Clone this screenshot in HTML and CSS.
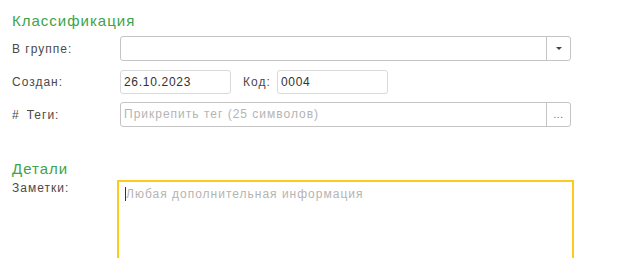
FILE: index.html
```html
<!DOCTYPE html>
<html lang="ru">
<head>
<meta charset="utf-8">
<link rel="stylesheet" href="styles.css">
</head>
<body>
<div class="form">
  <div class="title">Классификация</div>
  <div class="row">
    <div class="label">В группе:</div>
    <div class="field wide">
      <div class="value"></div>
      <div class="btn"><span class="tri"></span></div>
    </div>
  </div>
  <div class="row">
    <div class="label">Создан:</div>
    <div class="field short"><div class="value num">26.10.2023</div></div>
    <div class="label inline">Код:</div>
    <div class="field short"><div class="value num">0004</div></div>
  </div>
  <div class="row">
    <div class="label"><span class="hash">#</span>Теги:</div>
    <div class="field wide">
      <div class="value ph">Прикрепить тег (25 символов)</div>
      <div class="btn dots">...</div>
    </div>
  </div>
  <div class="title second">Детали</div>
  <div class="row notes-row">
    <div class="label notes-label">Заметки:</div>
    <div class="notes"><span class="caret"></span><span class="ph">Любая дополнительная информация</span></div>
  </div>
</div>
</body>
</html>
```
FILE: styles.css
```css
html, body {
  margin: 0;
  padding: 0;
  background: #ffffff;
  overflow: hidden;
}
.form {
  font-family: "Liberation Sans", Arial, sans-serif;
  font-size: 12px;
  letter-spacing: 1px;
  color: #4a4a4a;
  padding: 12px 0 0 12px;
  width: 608px;
  height: 246px;
  overflow: hidden;
}
.title {
  font-size: 15px;
  line-height: 18px;
  letter-spacing: 1px;
  color: #3ca34b;
  margin-bottom: 6px;
}
.title.second {
  margin-top: 33px;
  margin-bottom: 2px;
}
.row {
  display: flex;
  align-items: center;
  height: 25px;
  margin-bottom: 8px;
}
.label {
  width: 108px;
  flex: none;
}
.label.inline {
  width: 34px;
  margin-left: 12px;
}
.hash {
  margin-right: 7px;
}
.field {
  display: flex;
  box-sizing: border-box;
  height: 25px;
  border: 1px solid #c4c4c4;
  border-radius: 3px;
  background: #fff;
}
.field.short {
  width: 111px;
  height: 24px;
  border-color: #d9d9d9;
}
.field.wide {
  width: 451px;
}
.value {
  flex: 1;
  padding: 0 2px 0 3px;
  line-height: 22px;
  color: #333;
  white-space: nowrap;
  overflow: hidden;
}
.value.num {
  letter-spacing: 0.7px;
}
.ph {
  color: #b4b4b4;
}
.btn {
  width: 23px;
  border-left: 1px solid #c4c4c4;
  display: flex;
  align-items: center;
  justify-content: center;
  letter-spacing: 0;
}
.tri {
  width: 0;
  height: 0;
  border-left: 3px solid transparent;
  border-right: 3px solid transparent;
  border-top: 3px solid #444;
}
.dots {
  font-size: 10px;
  color: #666;
  line-height: 20px;
  letter-spacing: 0.5px;
}
.notes-row {
  align-items: flex-start;
  height: auto;
}
.notes-label {
  width: 105px;
  line-height: 16px;
}
.notes {
  box-sizing: border-box;
  width: 457px;
  height: 100px;
  border: 2px solid #fdcb1e;
  padding: 5px 6px;
  display: flex;
  align-items: flex-start;
  line-height: 14px;
}
.caret {
  width: 1px;
  height: 14px;
  background: #333;
}
```
